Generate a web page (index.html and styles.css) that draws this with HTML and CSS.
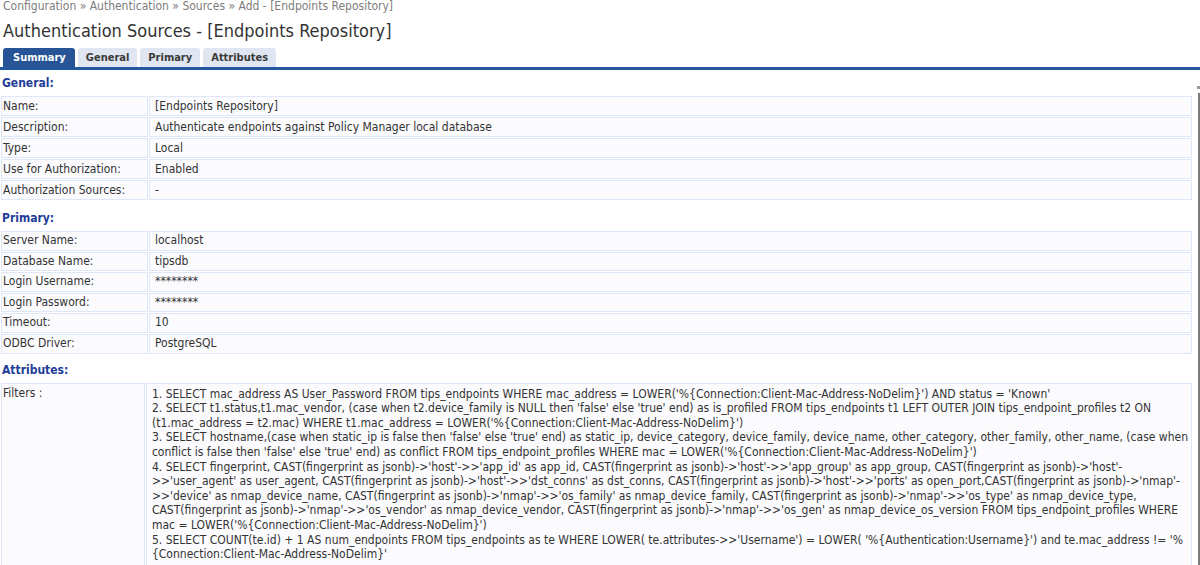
FILE: index.html
```html
<!DOCTYPE html>
<html>
<head>
<meta charset="utf-8">
<link rel="stylesheet" href="styles.css">
</head>
<body>
<div class="page">
  <div class="crumbs">Configuration » Authentication » Sources » Add - [Endpoints Repository]</div>
  <h1 class="title">Authentication Sources - [Endpoints Repository]</h1>
  <div class="tabs">
    <span class="tab active">Summary</span>
    <span class="tab">General</span>
    <span class="tab">Primary</span>
    <span class="tab">Attributes</span>
  </div>
  <div class="panel">
    <div class="section first">General:</div>
    <table class="grid">
      <tr><td class="lbl">Name:</td><td>[Endpoints Repository]</td></tr>
      <tr><td class="lbl">Description:</td><td>Authenticate endpoints against Policy Manager local database</td></tr>
      <tr><td class="lbl">Type:</td><td>Local</td></tr>
      <tr><td class="lbl">Use for Authorization:</td><td>Enabled</td></tr>
      <tr><td class="lbl">Authorization Sources:</td><td>-</td></tr>
    </table>
    <div class="section second">Primary:</div>
    <table class="grid tight">
      <tr><td class="lbl">Server Name:</td><td>localhost</td></tr>
      <tr><td class="lbl">Database Name:</td><td>tipsdb</td></tr>
      <tr><td class="lbl">Login Username:</td><td>********</td></tr>
      <tr><td class="lbl">Login Password:</td><td>********</td></tr>
      <tr><td class="lbl">Timeout:</td><td>10</td></tr>
      <tr><td class="lbl">ODBC Driver:</td><td>PostgreSQL</td></tr>
    </table>
    <div class="section third">Attributes:</div>
    <table class="grid">
      <tr><td class="lbl">Filters :</td><td class="filters"><span class="ln">1. SELECT mac_address AS User_Password FROM tips_endpoints WHERE mac_address = LOWER('%{Connection:Client-Mac-Address-NoDelim}') AND status = 'Known'</span><span class="ln">2. SELECT t1.status,t1.mac_vendor, (case when t2.device_family is NULL then 'false' else 'true' end) as is_profiled FROM tips_endpoints t1 LEFT OUTER JOIN tips_endpoint_profiles t2 ON</span><span class="ln">(t1.mac_address = t2.mac) WHERE t1.mac_address = LOWER('%{Connection:Client-Mac-Address-NoDelim}')</span><span class="ln">3. SELECT hostname,(case when static_ip is false then 'false' else 'true' end) as static_ip, device_category, device_family, device_name, other_category, other_family, other_name, (case when</span><span class="ln">conflict is false then 'false' else 'true' end) as conflict FROM tips_endpoint_profiles WHERE mac = LOWER('%{Connection:Client-Mac-Address-NoDelim}')</span><span class="ln">4. SELECT fingerprint, CAST(fingerprint as jsonb)-&gt;'host'-&gt;&gt;'app_id' as app_id, CAST(fingerprint as jsonb)-&gt;'host'-&gt;&gt;'app_group' as app_group, CAST(fingerprint as jsonb)-&gt;'host'-</span><span class="ln">&gt;&gt;'user_agent' as user_agent, CAST(fingerprint as jsonb)-&gt;'host'-&gt;&gt;'dst_conns' as dst_conns, CAST(fingerprint as jsonb)-&gt;'host'-&gt;&gt;'ports' as open_port,CAST(fingerprint as jsonb)-&gt;'nmap'-</span><span class="ln">&gt;&gt;'device' as nmap_device_name, CAST(fingerprint as jsonb)-&gt;'nmap'-&gt;&gt;'os_family' as nmap_device_family, CAST(fingerprint as jsonb)-&gt;'nmap'-&gt;&gt;'os_type' as nmap_device_type,</span><span class="ln">CAST(fingerprint as jsonb)-&gt;'nmap'-&gt;&gt;'os_vendor' as nmap_device_vendor, CAST(fingerprint as jsonb)-&gt;'nmap'-&gt;&gt;'os_gen' as nmap_device_os_version FROM tips_endpoint_profiles WHERE</span><span class="ln">mac = LOWER('%{Connection:Client-Mac-Address-NoDelim}')</span><span class="ln">5. SELECT COUNT(te.id) + 1 AS num_endpoints FROM tips_endpoints as te WHERE LOWER( te.attributes-&gt;&gt;'Username') = LOWER( '%{Authentication:Username}') and te.mac_address != '%</span><span class="ln">{Connection:Client-Mac-Address-NoDelim}'</span><span class="ln">&nbsp;</span></td></tr>
    </table>
  </div>
  <div class="scroll-arrow"></div>
  <div class="scroll-track"></div>
</div>
</body>
</html>
```
FILE: styles.css
```css
html, body {
  margin: 0;
  padding: 0;
  background: #ffffff;
  overflow: hidden;
}
.page {
  position: relative;
  width: 1200px;
  height: 565px;
  overflow: hidden;
  font-family: "DejaVu Sans Condensed", "DejaVu Sans", sans-serif;
  font-size: 12px;
  color: #333333;
}
.crumbs {
  margin-top: -1px;
  padding-left: 3px;
  height: 15px;
  line-height: 15px;
  color: #7d7d7d;
  font-size: 12px;
}
.title {
  margin: 0;
  padding: 6px 0 0 3px;
  font-size: 18px;
  font-weight: normal;
  line-height: 22px;
  color: #333333;
}
.tabs {
  display: flex;
  gap: 3px;
  padding-left: 3px;
  margin-top: 6px;
  height: 19px;
}
.tab {
  display: block;
  height: 19px;
  line-height: 19px;
  padding: 0 8px;
  background: #dfe6f1;
  border-radius: 3px 3px 0 0;
  font-weight: bold;
  font-size: 11px;
  color: #3a3a3a;
}
.tab.active {
  background: #275496;
  color: #ffffff;
  padding: 0 9px 0 10px;
}
.panel {
  border-top: 3px solid #2557a0;
}
.section {
  padding: 9px 0 6px 2px;
  line-height: 14px;
  font-weight: bold;
  color: #1f3d99;
}
.section.first {
  padding-top: 6px;
}
.section.second {
  padding-top: 10px;
}
.section.third {
  padding-top: 8px;
}
.grid {
  border-collapse: separate;
  border-spacing: 1px;
  width: 1193px;
  margin-top: -1px;
}
.grid td {
  border: 1px solid #dde7f7;
  background: #fbfbfe;
  padding: 2px 3px 2px 5px;
  line-height: 14px;
  vertical-align: top;
  white-space: nowrap;
}
.grid.tight td {
  line-height: 13.6px;
}
.grid td.lbl {
  width: 142px;
  padding-left: 1px;
  padding-right: 2px;
}
.grid td.filters {
  line-height: 14.6px;
  padding-top: 3px;
}
.ln {
  display: block;
}
.scroll-arrow {
  position: absolute;
  right: 0;
  top: 86px;
  width: 3px;
  height: 3px;
  background: #9a9a9a;
}
.scroll-track {
  position: absolute;
  right: 0;
  top: 93px;
  bottom: 0;
  width: 2px;
  background: #7a7a7a;
}
```
